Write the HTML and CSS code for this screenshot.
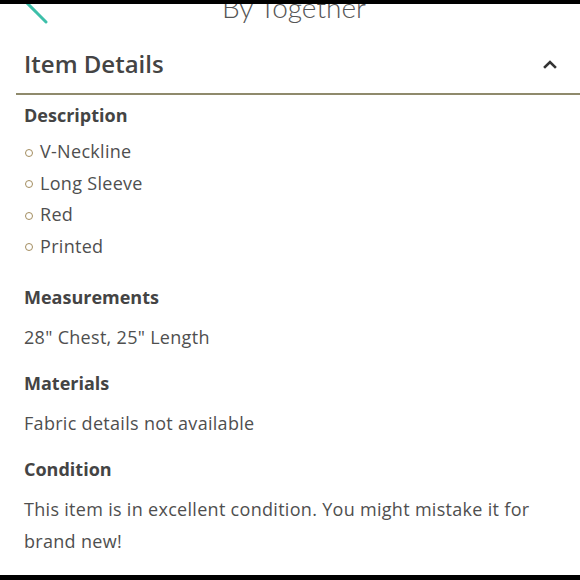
FILE: index.html
```html
<!DOCTYPE html>
<html lang="en">
<head>
<meta charset="utf-8">
<title>Item Details</title>
<link rel="stylesheet" href="styles.css">
</head>
<body>
<div class="topbar"></div>
<header class="nav">
  <svg class="back" width="30" height="30" viewBox="0 0 30 30" aria-hidden="true">
    <path d="M8 -2 L28 18" stroke="#3dbfa9" stroke-width="3" fill="none" stroke-linecap="round"/>
  </svg>
  <div class="nav-title">By Together</div>
</header>
<section class="details">
  <div class="details-head">
    <h2 class="details-title">Item Details</h2>
    <svg class="caret" width="14" height="10" viewBox="0 0 14 10" aria-hidden="true">
      <path d="M2 8 L7 3 L12 8" stroke="#333" stroke-width="2.6" fill="none" stroke-linecap="square"/>
    </svg>
  </div>
  <div class="details-body">
    <div class="block block-list">
      <h3 class="label label-list">Description</h3>
      <ul class="bullets">
        <li>V-Neckline</li>
        <li>Long Sleeve</li>
        <li>Red</li>
        <li>Printed</li>
      </ul>
    </div>
    <div class="block">
      <h3 class="label">Measurements</h3>
      <p class="text">28" Chest, 25" Length</p>
    </div>
    <div class="block">
      <h3 class="label">Materials</h3>
      <p class="text">Fabric details not available</p>
    </div>
    <div class="block">
      <h3 class="label">Condition</h3>
      <p class="text">This item is in excellent condition. You might mistake it for brand new!</p>
    </div>
  </div>
</section>
<div class="bottombar"></div>
</body>
</html>
```
FILE: styles.css
```css
html, body {
  margin: 0;
  padding: 0;
  background: #ffffff;
  height: 580px;
  overflow: hidden;
}
body {
  font-family: "Open Sans", "Noto Sans", sans-serif;
  color: #4a4a4a;
  display: flex;
  flex-direction: column;
}
.topbar {
  height: 4px;
  background: #000;
  flex: none;
}
.nav {
  position: relative;
  height: 26px;
  overflow: hidden;
  flex: none;
}
.back {
  position: absolute;
  left: 18px;
  top: 0;
}
.nav-title {
  text-align: center;
  font-family: "Lato", sans-serif;
  font-size: 28px;
  font-weight: 300;
  color: #555;
  line-height: 28px;
  margin-top: -11px;
  padding-left: 8px;
}
.details {
  flex: 1;
  display: flex;
  flex-direction: column;
}
.details-head {
  display: flex;
  align-items: center;
  justify-content: space-between;
  margin-left: 16px;
  padding: 4px 23px 0 8px;
  height: 59px;
  border-bottom: 2px solid #8f8a6c;
}
.details-title {
  margin: 0;
  font-size: 24px;
  font-weight: 600;
  color: #444;
}
.caret {
  display: block;
}
.details-body {
  flex: 1;
  padding: 8px 24px 0;
}
.block {
  margin-bottom: 18px;
}
.block-list {
  margin-bottom: 23px;
}
.label {
  margin: 0 0 12px;
  font-size: 18px;
  line-height: 24px;
  font-weight: 700;
  color: #444;
}
.label-list {
  margin-bottom: 9px;
}
.text {
  margin: 0;
  font-size: 18px;
  letter-spacing: 0.3px;
  line-height: 32px;
  color: #4f4f4f;
}
.bullets {
  list-style: none;
  margin: 0;
  padding: 0;
}
.bullets li {
  display: flex;
  align-items: center;
  gap: 7px;
  font-size: 18px;
  letter-spacing: 0.3px;
  line-height: 31.5px;
  color: #4f4f4f;
}
.bullets li::before {
  content: "";
  flex: none;
  width: 6px;
  height: 6px;
  border: 1.6px solid #a38d5f;
  border-radius: 50%;
  margin-left: 1px;
  margin-top: 2px;
}
.bottombar {
  height: 5px;
  background: #000;
  flex: none;
}
```
